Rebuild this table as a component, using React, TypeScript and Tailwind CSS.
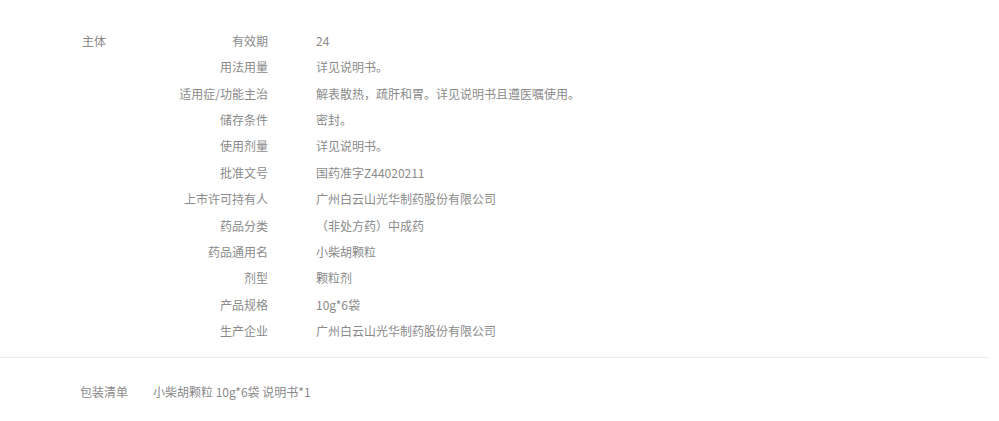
const rows: [string, string][] = [
  ["有效期", "24"],
  ["用法用量", "详见说明书。"],
  ["适用症/功能主治", "解表散热，疏肝和胃。详见说明书且遵医嘱使用。"],
  ["储存条件", "密封。"],
  ["使用剂量", "详见说明书。"],
  ["批准文号", "国药准字Z44020211"],
  ["上市许可持有人", "广州白云山光华制药股份有限公司"],
  ["药品分类", "（非处方药）中成药"],
  ["药品通用名", "小柴胡颗粒"],
  ["剂型", "颗粒剂"],
  ["产品规格", "10g*6袋"],
  ["生产企业", "广州白云山光华制药股份有限公司"],
]

export default function App() {
  return (
    <div
      className="w-[999px] h-[421px] bg-white text-[12px] text-[#8a8a8a]"
      style={{ fontFamily: '"Noto Sans CJK SC", "Noto Sans", sans-serif' }}
    >
      <div className="w-[989px] border-b border-[#ebebeb]">
        <div className="flex pl-[82px] pt-[28px] pb-[13px]">
          <div className="w-[86px] leading-[26.36px]">主体</div>
          <div className="flex flex-col">
            {rows.map(([k, v]) => (
              <div key={k} className="flex leading-[26.36px]">
                <div className="w-[100px] text-right whitespace-nowrap">{k}</div>
                <div className="pl-[48px] whitespace-nowrap">{v}</div>
              </div>
            ))}
          </div>
        </div>
      </div>
      <div className="flex pl-[80px] pt-[21px] leading-[26px]">
        <div className="w-[73px]">包装清单</div>
        <div>小柴胡颗粒 10g*6袋 说明书*1</div>
      </div>
    </div>
  )
}
